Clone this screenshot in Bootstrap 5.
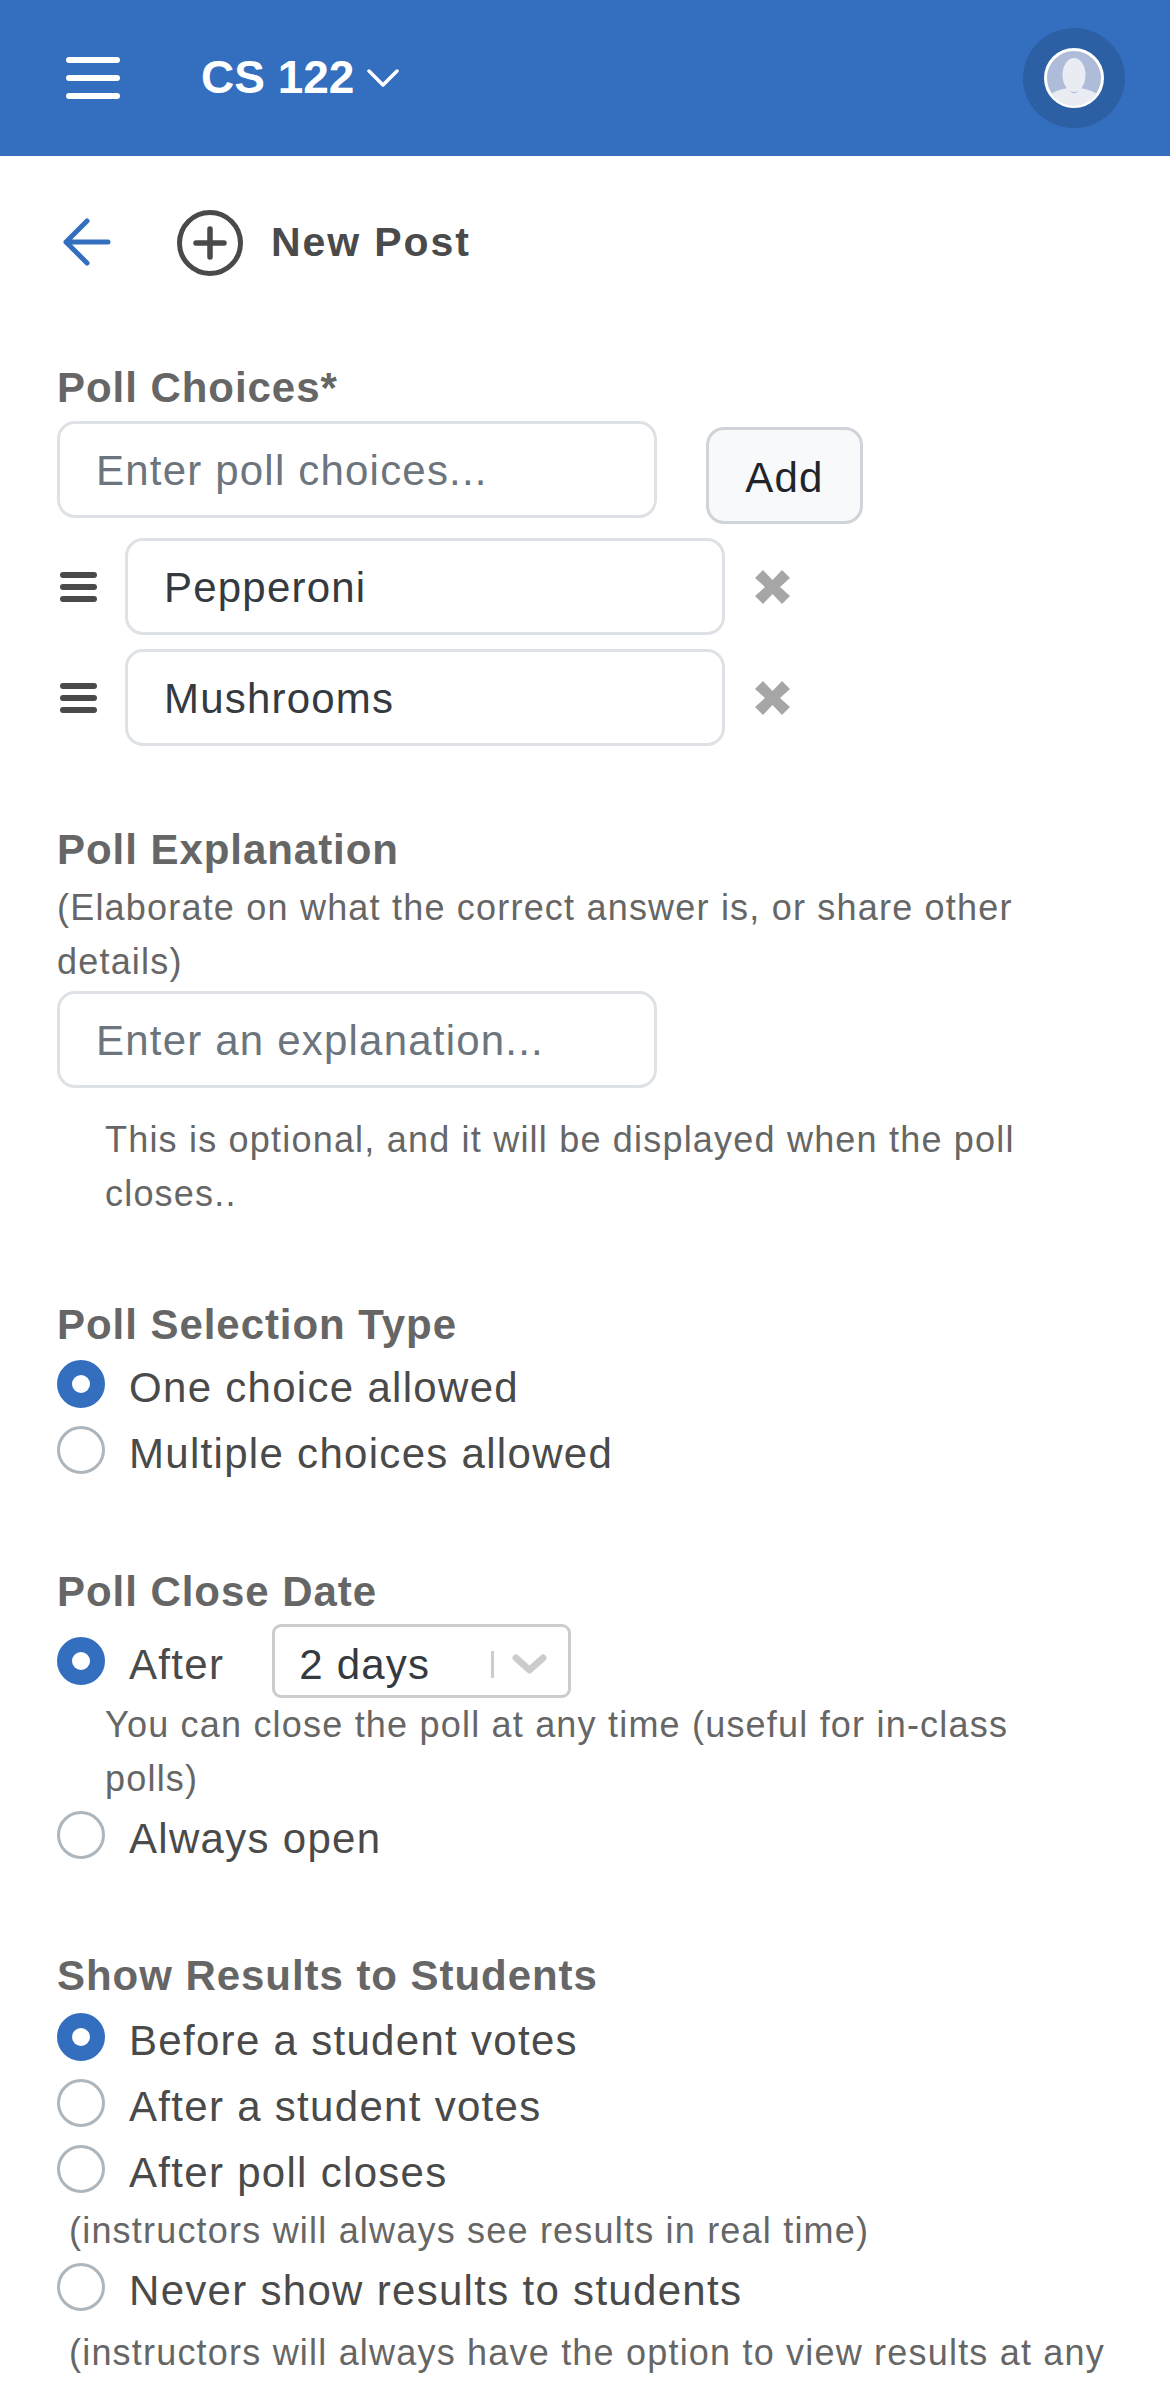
<!DOCTYPE html>
<html lang="en">
<head>
    <meta charset="UTF-8">
    <title>New Post</title>
    <link href="https://cdn.jsdelivr.net/npm/bootstrap@5.3.0/dist/css/bootstrap.min.css" rel="stylesheet">
    <style>
        body { font-family: "Liberation Sans", Arial, sans-serif; font-size: 42px; letter-spacing: 1.2px; color: #4a4a4a; background: #fff; }
        .top-bar { height: 156px; background: #346fbf; padding: 0 45px 0 66px; flex-wrap: nowrap; }
        .burger { width: 54px; height: 42px; }
        .course-name { margin-left: 81px; margin-bottom: 3px; color: #fff; font-size: 46px; font-weight: 700; line-height: 1; letter-spacing: 0; }
        .course-caret { width: 32px; height: 18px; margin-left: 13px; }
        .avatar-halo { width: 102px; height: 100px; background: #2c5fa4; }
        .page-head { padding: 54px 0 0 63px; height: 120px; }
        .page-title { color: #4a4a4a; font-size: 41px; font-weight: 700; letter-spacing: 1.9px; margin-left: 28px; }
        .form-area { padding: 80px 57px 0; }
        .field-label { color: #666; font-size: 42px; font-weight: 700; line-height: 63px; letter-spacing: 0.95px; margin: 0; }
        .choice-input.form-control { width: 600px; height: 97px; border: 3px solid #dee2e6; border-radius: 18px; font-size: 42px; letter-spacing: 1.2px; color: #343a40; padding: 3px 36px 0; }
        .choice-input.form-control::placeholder { color: #6c757d; opacity: 1; }
        .add-btn.btn { width: 157px; height: 97px; margin: 6px 0 0 49px; background: #f8f9fa; border: 3px solid #ced4da; border-radius: 18px; font-size: 42px; letter-spacing: 1.2px; color: #212529; padding: 3px 0 0; }
        .drag-icon { width: 37px; height: 30px; margin: 0 28px 0 3px; }
        .remove-icon { width: 35px; height: 34px; margin-left: 30px; }
        .help-line { color: #666; font-size: 36px; line-height: 54px; letter-spacing: 1.2px; margin: 0; }
        .radio-row { height: 66px; }
        .radio-row .form-check-input { width: 48px; height: 48px; margin: 0 24px 0 0; flex: none; border: 3px solid #adb5bd; background-size: 36px; }
        .radio-row .form-check-input:checked { background-color: #346fbf; border-color: #346fbf; }
        .radio-row .form-check-label { color: #4a4a4a; font-size: 42px; letter-spacing: 1.3px; margin-top: 6px; }
        .days-select { width: 299px; height: 74px; margin-left: 48px; border: 3px solid #ccc; border-radius: 9px; padding: 6px 21px 0 24px; color: #343a40; font-size: 42px; }
        .days-sep { width: 3px; height: 27px; background: #ccc; margin-left: auto; }
        .days-caret { width: 35px; height: 20px; margin-left: 18px; }
    </style>
</head>
<body>
    <nav class="navbar top-bar">
        <div class="d-flex align-items-center">
            <svg class="burger" viewBox="0 0 54 42"><g fill="#fff"><rect width="54" height="6" rx="3"/><rect y="18" width="54" height="6" rx="3"/><rect y="36" width="54" height="6" rx="3"/></g></svg>
            <span class="course-name">CS 122</span>
            <svg class="course-caret" viewBox="0 0 32 18"><path d="M2 2 16 16 30 2" fill="none" stroke="#fff" stroke-width="3.5" stroke-linecap="round" stroke-linejoin="round"/></svg>
        </div>
        <div class="avatar-halo rounded-circle d-flex align-items-center justify-content-center">
            <svg width="60" height="60" viewBox="0 0 60 60">
                <defs><clipPath id="avatar-clip"><circle cx="30" cy="30" r="28"/></clipPath></defs>
                <circle cx="30" cy="30" r="28.5" fill="#aebbd9" stroke="#fff" stroke-width="3"/>
                <g clip-path="url(#avatar-clip)">
                    <path d="M2 60V50C9 43 18 41 24 40 27 47 33 47 36 40 42 41 51 43 58 50V60Z" fill="#e9ecf2"/>
                    <ellipse cx="30" cy="27" rx="11.5" ry="17" fill="#e9ecf2"/>
                </g>
            </svg>
        </div>
    </nav>

    <div class="page-head d-flex align-items-start">
        <svg width="48" height="48" viewBox="0 0 48 48" class="mt-2"><path d="M45 24H3M24 3 3 24 24 45" fill="none" stroke="#346fbf" stroke-width="5" stroke-linecap="round" stroke-linejoin="round"/></svg>
        <div class="d-flex align-items-center" style="margin-left:66px">
            <svg width="66" height="66" viewBox="0 0 66 66"><circle cx="33" cy="33" r="30.5" fill="none" stroke="#4a4a4a" stroke-width="5"/><path d="M33 19V47M19 33H47" fill="none" stroke="#4a4a4a" stroke-width="5.5" stroke-linecap="round"/></svg>
            <span class="page-title">New Post</span>
        </div>
    </div>

    <form class="form-area">
        <p class="field-label">Poll Choices*</p>
        <div class="d-flex align-items-start" style="margin-top:2px">
            <input type="text" class="form-control choice-input" placeholder="Enter poll choices...">
            <button type="button" class="btn add-btn">Add</button>
        </div>
        <div class="d-flex align-items-center" style="margin-top:14px">
            <svg class="drag-icon" viewBox="0 0 37 30"><g fill="#4a4a4a"><rect width="37" height="6" rx="3"/><rect y="12" width="37" height="6" rx="3"/><rect y="24" width="37" height="6" rx="3"/></g></svg>
            <input type="text" class="form-control choice-input" value="Pepperoni">
            <svg class="remove-icon" viewBox="0 0 35 34"><path d="M8 0 17.5 10 27 0 35 8 25 17 35 26 27 34 17.5 24 8 34 0 26 10 17 0 8Z" fill="#a6a6a6"/></svg>
        </div>
        <div class="d-flex align-items-center" style="margin-top:14px">
            <svg class="drag-icon" viewBox="0 0 37 30"><g fill="#4a4a4a"><rect width="37" height="6" rx="3"/><rect y="12" width="37" height="6" rx="3"/><rect y="24" width="37" height="6" rx="3"/></g></svg>
            <input type="text" class="form-control choice-input" value="Mushrooms">
            <svg class="remove-icon" viewBox="0 0 35 34"><path d="M8 0 17.5 10 27 0 35 8 25 17 35 26 27 34 17.5 24 8 34 0 26 10 17 0 8Z" fill="#a6a6a6"/></svg>
        </div>

        <p class="field-label" style="margin-top:72px">Poll Explanation</p>
        <p class="help-line">(Elaborate on what the correct answer is, or share other details)</p>
        <input type="text" class="form-control choice-input" style="margin-top:2px" placeholder="Enter an explanation...">
        <p class="help-line" style="margin:25px 0 0 48px">This is optional, and it will be displayed when the poll closes..</p>

        <p class="field-label" style="margin-top:72px">Poll Selection Type</p>
        <div style="margin-top:-5px">
            <div class="form-check radio-row d-flex align-items-center p-0 m-0">
                <input class="form-check-input" type="radio" name="selection" id="sel-one" checked>
                <label class="form-check-label" for="sel-one">One choice allowed</label>
            </div>
            <div class="form-check radio-row d-flex align-items-center p-0 m-0">
                <input class="form-check-input" type="radio" name="selection" id="sel-multi">
                <label class="form-check-label" for="sel-multi">Multiple choices allowed</label>
            </div>
        </div>

        <p class="field-label" style="margin-top:77px">Poll Close Date</p>
        <div class="form-check radio-row d-flex align-items-center p-0" style="height:74px;margin:1px 0 0">
            <input class="form-check-input" type="radio" name="closing" id="close-after" checked>
            <label class="form-check-label" for="close-after">After</label>
            <div class="days-select d-flex align-items-center">
                <span>2 days</span>
                <span class="days-sep"></span>
                <svg class="days-caret" viewBox="0 0 35 20"><path d="M4 4 17.5 16 31 4" fill="none" stroke="#ccc" stroke-width="7" stroke-linecap="round" stroke-linejoin="round"/></svg>
            </div>
        </div>
        <p class="help-line" style="margin-left:48px;padding-right:40px">You can close the poll at any time (useful for in-class polls)</p>
        <div class="form-check radio-row d-flex align-items-center p-0" style="margin:-4px 0 0">
            <input class="form-check-input" type="radio" name="closing" id="close-open">
            <label class="form-check-label" for="close-open">Always open</label>
        </div>

        <p class="field-label" style="margin-top:76px">Show Results to Students</p>
        <div style="margin-top:-3px">
            <div class="form-check radio-row d-flex align-items-center p-0 m-0">
                <input class="form-check-input" type="radio" name="results" id="res-before" checked>
                <label class="form-check-label" for="res-before">Before a student votes</label>
            </div>
            <div class="form-check radio-row d-flex align-items-center p-0 m-0">
                <input class="form-check-input" type="radio" name="results" id="res-after">
                <label class="form-check-label" for="res-after">After a student votes</label>
            </div>
            <div class="form-check radio-row d-flex align-items-center p-0 m-0">
                <input class="form-check-input" type="radio" name="results" id="res-closes">
                <label class="form-check-label" for="res-closes">After poll closes</label>
            </div>
            <p class="help-line" style="margin:2px 0 0 12px">(instructors will always see results in real time)</p>
            <div class="form-check radio-row d-flex align-items-center p-0" style="margin:-4px 0 0">
                <input class="form-check-input" type="radio" name="results" id="res-never">
                <label class="form-check-label" for="res-never">Never show results to students</label>
            </div>
            <p class="help-line" style="margin:6px 0 0 12px">(instructors will always have the option to view results at any</p>
        </div>
    </form>

    <script src="https://cdn.jsdelivr.net/npm/bootstrap@5.3.0/dist/js/bootstrap.bundle.min.js"></script>
</body>
</html>
